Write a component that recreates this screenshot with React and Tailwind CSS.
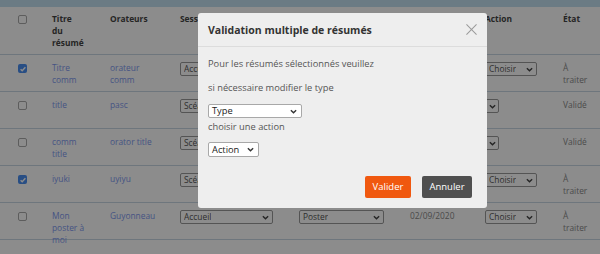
import React from "react";

function Chevron({ className = "" }) {
  return (
    <svg viewBox="0 0 8 5" className={"w-[7px] h-[5px] shrink-0 " + className}>
      <path d="M1 1l3 3 3-3" fill="none" stroke="currentColor" strokeWidth="1.6" />
    </svg>
  );
}

function FakeSelect({ label, w }) {
  return (
    <div
      className={
        "flex items-center justify-between h-[14px] border border-[#9a9a9a] rounded-[2px] bg-white pl-[3px] pr-[3px] text-[8.4px] leading-none text-[#555] " +
        w
      }
    >
      <span className="truncate">{label}</span>
      <Chevron className="text-[#444]" />
    </div>
  );
}

function Checkbox({ checked }) {
  return checked ? (
    <div className="w-[9px] h-[9px] rounded-[2px] bg-[#4a8ef0] flex items-center justify-center">
      <svg viewBox="0 0 10 10" className="w-[8px] h-[8px]">
        <path d="M2 5.2l2 2 4-4.4" fill="none" stroke="white" strokeWidth="1.8" />
      </svg>
    </div>
  ) : (
    <div className="w-[9px] h-[9px] rounded-[2px] border border-[#a9a9a9] bg-white" />
  );
}

const rows = [
  { checked: true, title: ["Titre", "comm"], orat: ["orateur", "comm"], session: "Accueil", type: "Poster", date: "01/09/2020", action: "Choisir", etat: ["À", "traiter"] },
  { checked: false, title: ["title"], orat: ["pasc"], session: "Scéance plénière", type: "Oral", date: "01/09/2020", action: "", etat: ["Validé"] },
  { checked: false, title: ["comm", "title"], orat: ["orator title"], session: "Scéance plénière", type: "Oral", date: "01/09/2020", action: "", etat: ["Validé"] },
  { checked: true, title: ["iyuki"], orat: ["uyiyu"], session: "Scéance plénière", type: "Oral", date: "02/09/2020", action: "Choisir", etat: ["À", "traiter"] },
  { checked: false, title: ["Mon", "poster à", "moi"], orat: ["Guyonneau"], session: "Accueil", type: "Poster", date: "02/09/2020", action: "Choisir", etat: ["À", "traiter"] },
];

const grid = "grid grid-cols-[45px_58px_70px_119px_111px_75px_78px_44px]";

export default function App() {
  return (
    <div className="relative w-[600px] h-[254px] overflow-hidden bg-white font-['Open_Sans',sans-serif] text-[8.4px] leading-[12px]">
      <div className="h-[7px] bg-[#c3e0f0]" />
      {/* header */}
      <div className={grid + " h-[48px] border-b border-[#c8d8e4] font-bold text-[#444] pt-[6px]"}>
        <div className="pl-[18px] pt-[2px]"><Checkbox checked={false} /></div>
        <div className="pl-[7px]">Titre<br />du<br />résumé</div>
        <div className="pl-[7px]">Orateurs</div>
        <div className="pl-[7px]">Session</div>
        <div className="pl-[7px]">Type</div>
        <div className="pl-[7px]">Date</div>
        <div className="pl-[7px]">Action</div>
        <div className="pl-[7px]">État</div>
      </div>
      {rows.map((r, i) => (
        <div key={i} className={grid + " h-[37px] border-b border-[#c8d8e4] pt-[7px]"}>
          <div className="pl-[18px] pt-[2px]"><Checkbox checked={r.checked} /></div>
          <div className="pl-[7px] text-[#8099f0]">
            {r.title.map((t, j) => <div key={j}>{t}</div>)}
          </div>
          <div className="pl-[7px] text-[#8099f0] whitespace-nowrap">
            {r.orat.map((t, j) => <div key={j}>{t}</div>)}
          </div>
          <div className="pl-[7px]"><FakeSelect label={r.session} w="w-[93px]" /></div>
          <div className="pl-[7px]"><FakeSelect label={r.type} w="w-[85px]" /></div>
          <div className="pl-[7px] text-[#8a8a8a]">{r.date}</div>
          <div className="pl-[7px]">
            <FakeSelect label={r.action} w={r.action ? "w-[52px]" : "w-[14px]"} />
          </div>
          <div className="pl-[7px] text-[#8a8a8a]">
            {r.etat.map((t, j) => <div key={j}>{t}</div>)}
          </div>
        </div>
      ))}

      {/* overlay */}
      <div className="absolute inset-0 bg-black/45">
        <div className="absolute left-[198px] top-[13px] w-[289px] h-[195px] bg-[#eeeeee] rounded-[3px] flex flex-col">
          <div className="h-[34px] flex items-center justify-between pl-[10px] pr-[10px] border-b border-[#dcdcdc]">
            <span className="font-bold text-[10.5px] text-[#333]">Validation multiple de résumés</span>
            <svg viewBox="0 0 12 12" className="w-[11px] h-[11px] text-[#9a9a9a]">
              <path d="M0.5 0.5l11 11M11.5 0.5L0.5 11.5" stroke="currentColor" strokeWidth="1.1" fill="none" />
            </svg>
          </div>
          <div className="pl-[10px] pt-[10px] text-[9.3px] leading-[14px] text-[#555] flex flex-col">
            <div>Pour les résumés sélectionnés veuillez</div>
            <div className="mt-[10px]">si nécessaire modifier le type</div>
            <div className="mt-[9px] flex items-center justify-between w-[94px] h-[14px] border border-[#a8a8a8] rounded-[2px] bg-white pl-[3px] pr-[4px] text-[#222] leading-none">
              <span>Type</span>
              <Chevron className="text-[#333]" />
            </div>
            <div className="mt-[2px]">choisir une action</div>
            <div className="mt-[8px] flex items-center justify-between w-[51px] h-[15px] border border-[#a8a8a8] rounded-[2px] bg-white pl-[3px] pr-[4px] text-[#222] leading-none">
              <span>Action</span>
              <Chevron className="text-[#333]" />
            </div>
          </div>
          <div className="mt-auto mb-[10px] flex justify-end gap-[11px] pr-[15px]">
            <button className="h-[22px] w-[46px] rounded-[2px] bg-[#f0580f] text-white text-[9.5px]">Valider</button>
            <button className="h-[22px] w-[50px] rounded-[2px] bg-[#4f4f4f] text-white text-[9.5px]">Annuler</button>
          </div>
        </div>
      </div>
    </div>
  );
}
